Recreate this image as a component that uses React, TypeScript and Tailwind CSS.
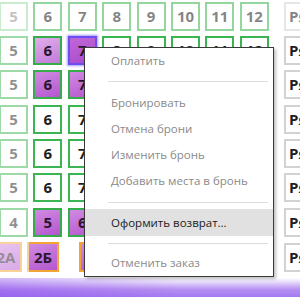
import React from "react"

type Kind = "free" | "busy" | "busyLight" | "sel" | "orange"
type Seat = { n: string; kind: Kind }

const s = (n: string, kind: Kind = "free"): Seat => ({ n, kind })

const rows: Seat[][] = [
  ["5", "6", "7", "8", "9", "10", "11", "12"].map((n) => s(n)),
  [s("5"), s("6", "busyLight"), s("7", "sel"), s("8"), s("9"), s("10"), s("11"), s("12")],
  [s("5"), s("6", "busy"), s("7", "busy"), s("8"), s("9"), s("10"), s("11"), s("12")],
  ["5", "6", "7", "8", "9", "10", "11", "12"].map((n) => s(n)),
  ["5", "6", "7", "8", "9", "10", "11", "12"].map((n) => s(n)),
  ["5", "6", "7", "8", "9", "10", "11", "12"].map((n) => s(n)),
  [s("4"), s("5", "busy"), s("6", "busy"), s("7"), s("8"), s("9"), s("10"), s("11")],
]

const kindClass: Record<Kind, string> = {
  free: "bg-white border-[#3bb54f] text-[#1f1f1f]",
  busy: "bg-[linear-gradient(160deg,#d08ae2,#b556ce)] border-[#36ad4b] text-[#2a1630]",
  busyLight: "bg-[linear-gradient(160deg,#dfaeea,#c27bd8)] border-[#36ad4b] text-[#2a1630]",
  sel: "bg-[linear-gradient(160deg,#c067d8,#a94bcb)] border-[#6b4ef2] text-[#2a1630] shadow-[0_0_2px_1px_#a898fa]",
  orange: "bg-[linear-gradient(160deg,#d08ae2,#b556ce)] border-[#f2a532] text-[#2a1630]",
}

function Cell({ seat }: { seat: Seat }) {
  return (
    <div
      className={`w-[29px] h-[29px] shrink-0 border-2 flex items-center justify-center text-[15px] font-bold leading-none ${kindClass[seat.kind]}`}
    >
      {seat.n}
    </div>
  )
}

function RowLabel() {
  return (
    <div className="ml-auto w-[30px] h-[29px] shrink-0 border-2 border-[#d2d2d2] bg-white flex items-center pl-[3px] text-[15px] font-bold text-[#1f1f1f] leading-none overflow-hidden whitespace-nowrap">
      Ряд
    </div>
  )
}

function MenuItem({ label, active = false, h = "h-[26px]" }: { label: string; active?: boolean; h?: string }) {
  return (
    <div
      className={`${h} flex items-center pl-[26px] text-[11.5px] ${
        active ? "bg-[#e1e1e1] text-[#1b1b1b]" : "text-[#8a8a8a]"
      }`}
    >
      {label}
    </div>
  )
}

function Sep({ mt, mb }: { mt: string; mb: string }) {
  return <div className={`${mt} ${mb} ml-[23px] mr-[5px] h-px bg-[#dcdcdc]`} />
}

export default function App() {
  return (
    <div className="relative w-[300px] h-[297px] overflow-hidden bg-white font-['Open_Sans',sans-serif]">
      <div className="flex flex-col gap-[5.4px] pt-[1.5px] h-[278px]">
        {rows.map((row, i) => (
          <div key={i} className="flex items-center w-[314px]">
            <div className="flex gap-[5.4px] ml-[-1px]">
              {row.map((seat, j) => (
                <Cell key={j} seat={seat} />
              ))}
            </div>
            <RowLabel />
          </div>
        ))}
        <div className="flex items-center w-[314px]">
          <div className="flex ml-[-10px] gap-[5px]">
            {["2А", "2Б"].map((n) => (
              <div
                key={n}
                className={`w-[32px] h-[30px] border-2 flex items-center justify-center text-[15px] font-bold leading-none ${kindClass.orange}`}
              >
                {n}
              </div>
            ))}
            <div className={`ml-[15px] w-[32px] h-[30px] border-2 flex items-center justify-center text-[15px] font-bold ${kindClass.orange}`}>
              3А
            </div>
          </div>
          <RowLabel />
        </div>
      </div>

      <div className="h-[19px] bg-[linear-gradient(to_right,rgba(130,60,235,0.35),rgba(130,60,235,0)_60%),linear-gradient(to_bottom,#ffffff_0%,#e2d3fa_25%,#b690f2_60%,#a47af0_100%)]" />

      {/* fades over the first column and the top row */}
      <div className="absolute left-0 top-0 w-[29px] h-[278px] bg-white/50" />
      <div className="absolute left-0 top-0 w-[300px] h-[32px] bg-white/45" />

      {/* context menu */}
      <div className="absolute left-[84px] top-[47px] w-[190px] border border-[#3a3a3a] bg-white shadow-[2px_2px_3px_rgba(0,0,0,0.25)]">
        <MenuItem label="Оплатить" />
        <Sep mt="mt-[7px]" mb="mb-[8px]" />
        <MenuItem label="Бронировать" />
        <MenuItem label="Отмена брони" />
        <MenuItem label="Изменить бронь" />
        <MenuItem label="Добавить места в бронь" />
        <Sep mt="mt-[8px]" mb="mb-[6px]" />
        <MenuItem label="Оформить возврат..." active h="h-[27px]" />
        <Sep mt="mt-[7px]" mb="mb-[6px]" />
        <MenuItem label="Отменить заказ" />
      </div>
    </div>
  )
}
